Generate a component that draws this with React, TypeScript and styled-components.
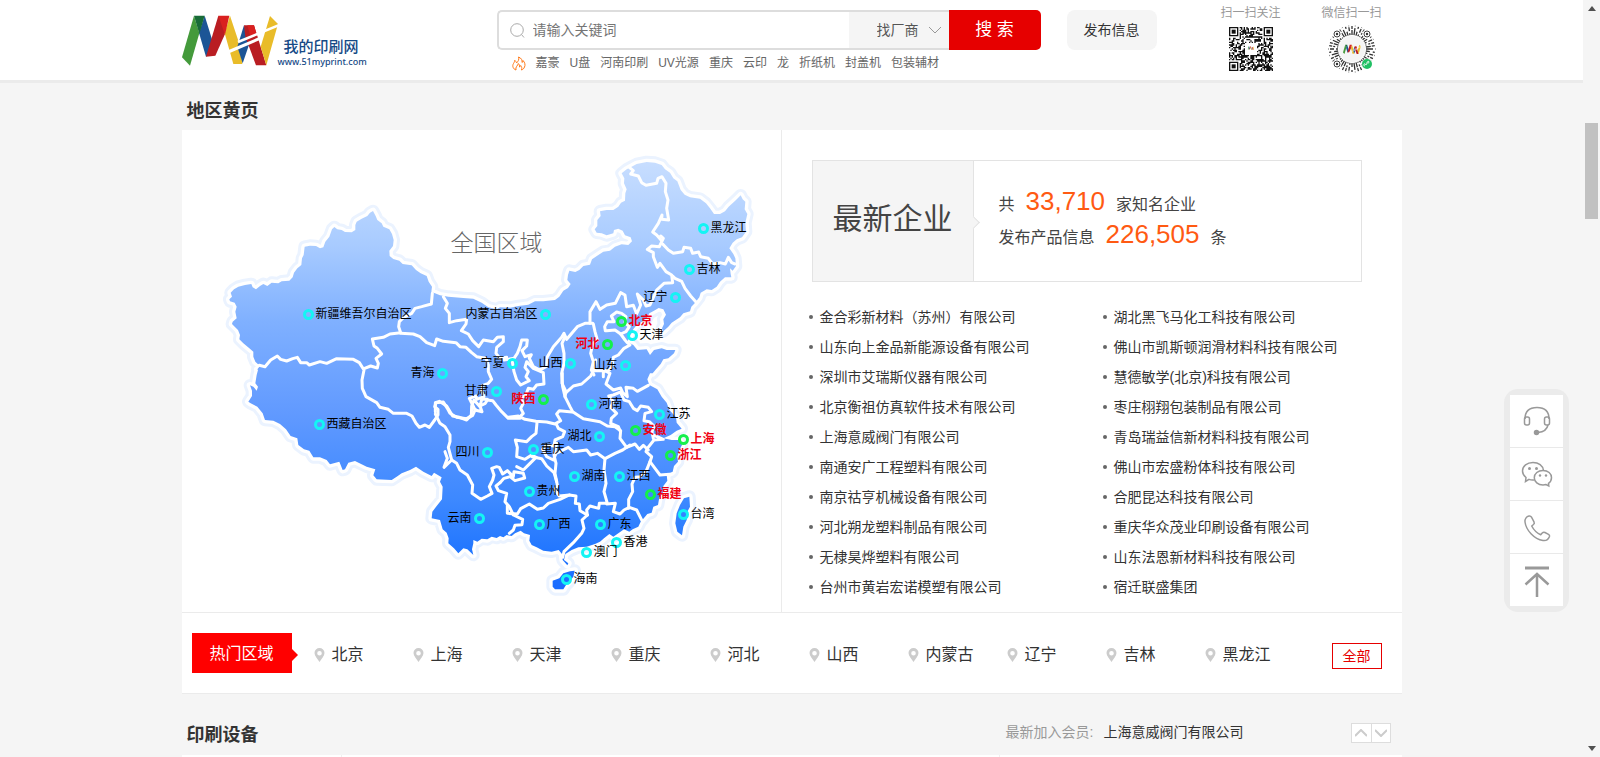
import React from 'react';
import styled, { createGlobalStyle } from 'styled-components';

const GlobalStyle = createGlobalStyle`
  *, *::before, *::after { box-sizing: border-box; }
  body {
    margin: 0;
    background: #f5f5f5;
    color: #333;
    font: 14px/20px "Liberation Sans", "Noto Sans CJK SC", sans-serif;
  }
  a { color: inherit; text-decoration: none; }
  button, input, select { font: inherit; color: inherit; border: 0; margin: 0; padding: 0; }
  button { cursor: pointer; }
  h1, h2, p, ul { margin: 0; padding: 0; font-weight: inherit; }
  ul { list-style: none; }
`;

const Page = styled.div`
  display: flex;
  flex-direction: column;
  min-height: 100vh;
  padding-right: 17px;
`;

const Container = styled.div`
  width: 1220px;
  max-width: 100%;
  margin: 0 auto;
`;

/* ---------- header ---------- */

const Header = styled.header`
  background: #fff;
  box-shadow: 0 3px 0 #ebebeb;
`;

const HeaderInner = styled(Container)`
  display: flex;
  align-items: flex-start;
  height: 80px;
`;

const LogoLink = styled.a`
  display: flex;
  flex-shrink: 0;
  width: 315px;
  padding-top: 14px;
`;

const LogoText = styled.span`
  display: flex;
  flex-direction: column;
  gap: 2px;
  padding-top: 23px;
  margin-left: -1px;
  color: #164a86;
`;

const LogoName = styled.span`
  font: 500 15px/18px "Noto Sans CJK SC", sans-serif;
  padding-left: 6px;
`;

const LogoUrl = styled.span`
  font: 500 9px/10px "Noto Sans", "Noto Sans CJK SC", sans-serif;
`;

const SearchArea = styled.div`
  width: 544px;
  padding-top: 10px;
`;

const SearchForm = styled.form`
  display: flex;
  height: 40px;
`;

const SearchBox = styled.div`
  flex: 1;
  display: flex;
  align-items: center;
  background: #fff;
  border: 2px solid #ddd;
  border-right: 0;
  border-radius: 5px 0 0 5px;
  padding-left: 11px;
  gap: 8px;
`;

const SearchInput = styled.input`
  flex: 1;
  min-width: 0;
  height: 36px;
  background: none;
  outline: none;
  &::placeholder { color: #757575; opacity: 1; }
`;

const SelectWrap = styled.div`
  display: flex;
  align-items: center;
  width: 100px;
  height: 36px;
  padding-right: 8px;
  background: #f5f5f5;
`;

const KindSelect = styled.select`
  flex: 1;
  appearance: none;
  height: 36px;
  padding-left: 28px;
  background: none;
  color: #555;
  outline: none;
`;

const SearchButton = styled.button`
  width: 92px;
  background: #e60000;
  color: #fff;
  font-size: 17px;
  border-radius: 0 5px 5px 0;
`;

const HotWords = styled.div`
  display: flex;
  align-items: center;
  gap: 10px;
  padding: 3px 0 0 15px;
  font-size: 12px;
  color: #666;
  white-space: nowrap;
`;

const PublishButton = styled.button`
  flex-shrink: 0;
  width: 90px;
  height: 40px;
  margin: 10px 64px 0 26px;
  background: #f5f5f5;
  border-radius: 8px;
`;

const Codes = styled.div`
  display: flex;
  gap: 41px;
`;

const CodeBlock = styled.div`
  display: flex;
  flex-direction: column;
  align-items: center;
  width: 60px;
  height: 75px;
  padding-top: 3px;
  font-size: 12px;
  color: #999;
  white-space: nowrap;
`;

const CodeArt = styled.div`
  display: flex;
  flex: 1;
  align-items: center;
`;

/* ---------- sections ---------- */

const SectionHead = styled(Container)<{ $top: number; $bottom: number }>`
  display: flex;
  align-items: center;
  padding: ${p => p.$top}px 11px ${p => p.$bottom}px 5px;
`;

const SectionTitle = styled.h2`
  flex: 1;
  font-size: 18px;
  line-height: 24px;
  font-weight: 700;
`;

const Card = styled(Container)`
  background: #fff;
  border-bottom: 1px solid #ebebeb;
`;

const Split = styled.div`
  display: flex;
  border-bottom: 1px solid #ebebeb;
`;

const MapPane = styled.div`
  position: relative;
  width: 600px;
  height: 482px;
  border-right: 1px solid #ebebeb;
`;

const MapSvg = styled.svg`
  display: block;
`;

const MapTitle = styled.h2`
  position: absolute;
  left: 269px;
  top: 97px;
  font: 300 23px/28px "Noto Sans CJK SC", sans-serif;
  color: #666;
`;

const Place = styled.a<{ $x: number; $y: number; $left?: boolean; $hot?: boolean }>`
  position: absolute;
  top: ${p => p.$y - 8}px;
  ${p => (p.$left ? `right: ${594 - p.$x}px;` : `left: ${p.$x - 5}px;`)}
  display: flex;
  flex-direction: ${p => (p.$left ? 'row-reverse' : 'row')};
  align-items: center;
  gap: 2px;
  font-size: 12px;
  line-height: 17px;
  white-space: nowrap;
  color: ${p => (p.$hot ? '#f00012' : '#000')};
  font-weight: ${p => (p.$hot ? 700 : 400)};
  &::before {
    content: "";
    width: 11px;
    height: 11px;
    border: 3px solid ${p => (p.$hot ? '#13f04c' : '#14f4f4')};
    border-radius: 50%;
  }
`;

const InfoPane = styled.div`
  flex: 1;
  padding: 30px 0 0 30px;
`;

const StatBox = styled.div`
  display: flex;
  width: 550px;
  height: 122px;
  border: 1px solid #e3e3e3;
`;

const StatName = styled.h2`
  position: relative;
  width: 161px;
  padding-left: 20px;
  font-size: 30px;
  line-height: 116px;
  color: #444;
  background: #f5f5f5;
  border-right: 1px solid #e3e3e3;
  &::after {
    content: "";
    position: absolute;
    right: -5px;
    top: 57px;
    width: 9px;
    height: 9px;
    background: #f5f5f5;
    border: solid #e3e3e3;
    border-width: 1px 1px 0 0;
    transform: rotate(45deg);
  }
`;

const StatLines = styled.div`
  padding: 24px 0 0 25px;
  font-size: 16px;
  line-height: 33px;
  color: #444;
`;

const StatLine = styled.p`
  display: flex;
  align-items: baseline;
  gap: 11px;
  height: 33px;
`;

const Figure = styled.strong`
  font-weight: 400;
  font-size: 26px;
  color: #ff5a12;
`;

const CompanyList = styled.ul`
  display: grid;
  grid-template-columns: 294px 1fr;
  grid-auto-rows: 30px;
  padding-top: 20px;
`;

const Company = styled.li`
  display: flex;
  align-items: center;
  gap: 7px;
  margin-left: -3px;
  white-space: nowrap;
  &::before {
    content: "";
    width: 4px;
    height: 4px;
    background: #666;
    border-radius: 50%;
  }
`;

const RegionRow = styled.div`
  display: flex;
  align-items: center;
  height: 80px;
  padding: 0 20px 0 10px;
`;

const RegionTag = styled.h2`
  position: relative;
  width: 100px;
  height: 40px;
  background: #f00;
  color: #fff;
  font-size: 16px;
  line-height: 42px;
  text-align: center;
  &::after {
    content: "";
    position: absolute;
    left: 100px;
    top: 16px;
    border: solid transparent;
    border-width: 6px 0 6px 6px;
    border-left-color: #f00;
  }
`;

const RegionList = styled.ul`
  flex: 1;
  display: flex;
  padding: 4px 0 0 22px;
`;

const Region = styled.li`
  width: 99px;
  font-size: 16px;
  line-height: 24px;
  white-space: nowrap;
`;

const RegionLink = styled.a`
  display: flex;
  align-items: center;
  gap: 7px;
`;

const AllLink = styled.a`
  width: 50px;
  margin-top: 6px;
  border: 1px solid #e60000;
  color: #e60000;
  line-height: 24px;
  text-align: center;
`;

const NewMember = styled.p`
  display: flex;
  gap: 10px;
  margin-right: 107px;
  padding-bottom: 5px;
`;

const Muted = styled.span`
  color: #999;
`;

const Stepper = styled.div`
  display: flex;
  margin-bottom: 3px;
  border: 1px solid #ddd;
  background: #fff;
`;

const StepButton = styled.button`
  display: flex;
  align-items: center;
  justify-content: center;
  width: 19px;
  height: 18px;
  background: #fff;
  & + & { border-left: 1px solid #ddd; }
`;

const NextCard = styled(Container)`
  flex: 1;
  display: grid;
  grid-template-columns: 160px 658px 1fr;
  background: #fff;
`;

const NextColumn = styled.div`
  border-right: 1px solid #f0f0f0;
`;

/* ---------- floating parts ---------- */

const SideTools = styled.nav`
  position: fixed;
  right: 37px;
  top: 395px;
  display: flex;
  flex-direction: column;
  gap: 1px;
  background: #e9e9e9;
  box-shadow: 0 0 0 6px #ebebeb;
  border-radius: 8px;
`;

const ToolButton = styled.button`
  display: flex;
  align-items: center;
  justify-content: center;
  width: 53px;
  height: 52px;
  background: #fff;
`;

const ScrollTrack = styled.div`
  position: fixed;
  top: 0;
  right: 0;
  bottom: 0;
  width: 17px;
  display: flex;
  flex-direction: column;
  align-items: center;
  padding: 6px 0;
  background: #f5f5f5;
`;

const ScrollThumb = styled.div`
  width: 13px;
  height: 96px;
  margin: 112px 0 auto;
  background: #c1c1c1;
`;

/* ---------- map data (map units are thirds of a pixel) ---------- */

const pts = (dx: number, dy: number, list: string) =>
  list
    .split(' ')
    .map(p => {
      const [x, y] = p.split(',').map(Number);
      return `${x + dx},${y + dy}`;
    })
    .join(' ');

const west = (l: string) => pts(0, 0, l);
const north = (l: string) => pts(840, 0, l);
const south = (l: string) => pts(570, 660, l);
const southwest = (l: string) => pts(60, 690, l);

const mainland = [
  west('62,458 72,448 85,440 105,435 124,432 128,442 138,448 150,438 160,432 172,438 185,428 205,430 215,424 238,422 248,412 252,398 262,385 274,375 276,355 281,345 284,320 300,317 318,318 330,325 340,322 346,305 358,290 366,268 373,261 382,268 395,270 405,276 425,277 436,270 436,255 440,245 455,236 472,228 480,218 489,213 497,228 502,240 515,250 520,260 538,268 546,282 551,300 549,318 538,332 539,348 550,357 568,362 578,372 605,376 618,390 632,400 650,408 656,425 666,440 664,455 690,466 715,470 760,474 790,476 815,488 835,502 860,508'),
  north('30,502 60,503 85,498 115,494 135,484 160,484 195,480 208,470 220,452 234,444 242,432 232,420 234,405 238,392 256,396 268,390 280,378 300,374 306,358 325,345 340,335 360,332 375,320 395,313 415,315 426,304 422,292 405,286 398,272 385,266 372,270 370,280 350,286 335,280 320,278 314,268 322,258 322,240 332,228 330,214 350,210 370,210 385,200 393,188 405,182 406,160 410,148 402,130 403,115 395,100 410,88 425,80 440,72 470,66 495,68 515,75 525,88 540,98 550,115 562,124 572,150 584,164 600,172 630,176 648,190 660,205 672,222 690,222 705,214 716,200 738,180 752,166 758,178 766,185 764,208 772,222 766,248 768,275 756,292 740,298 728,308 718,325 730,342 736,355 738,378 728,392 720,385 722,402 724,412 705,412 690,425 680,440 665,450 650,448 632,458 628,472 614,490 604,500 600,514 580,520 570,532 545,548 535,560 520,574 516,565 522,552 520,538 528,524 520,508 506,504 492,512 478,520 470,535 456,545 440,555 428,570 420,588 412,605 430,615 442,630 470,628 480,645 492,630 515,625 530,630 556,630 552,640 535,655 520,658 512,672 498,688 488,700'),
  south('750,40 742,58 748,75 772,88 785,110 800,128 808,150 828,172 830,188 845,206 830,212 812,225 790,235 815,240 838,240 846,255 838,270 832,290 834,305 822,318 818,335 800,345 802,362 790,378 788,400 778,412 774,435 760,440 755,458 742,462 732,474 722,485 715,500 698,508 688,515 672,508 655,520 640,530 628,522 612,535 600,545 585,552 560,560 535,562 515,570 496,582 492,600 505,610 502,616 488,600 486,582 476,570 455,575 430,572 410,562 395,555 388,542 390,525 372,520 362,512 345,520 335,528 320,525 310,532 300,528 290,534 275,530 262,538 245,536 232,545 220,540'),
  southwest('730,520 726,538 730,555 712,538 700,535 685,550 672,535 655,520 656,505 650,488 638,478 630,450 605,445 607,425 620,408 636,388 638,350 630,335 635,322 612,308 605,318 580,305 558,290 540,300 515,310 500,320 485,330 440,328 430,316 436,298 410,290 375,273 355,278 345,298 338,300 328,275 300,283 290,270 270,262 250,262 238,242 222,238 205,225 202,205 182,198 168,178 150,162 130,152 105,150 98,130 82,110 62,100 55,95 66,78 66,62 60,46 70,50 80,62 84,50 76,40 80,15 84,0'),
  west('142,688 150,678 136,665 130,650 130,635 118,625 100,610 88,598 90,585 84,570 66,552 68,545 80,535 76,515 80,500 74,488 60,484 58,478 66,470'),
].join(' ');

const islands = [
  south('458,662 478,655 490,640 510,634 524,632 520,650 508,665 498,675 490,688 465,688 458,680'),
  south('852,415 868,410 870,440 862,455 860,480 850,500 846,526 832,515 826,490 830,460 840,435'),
];

const borders = [
  west('667,460 664,492 635,500 615,505 605,520 580,533 568,545 566,560 572,578 540,582 520,592 487,597 492,618 502,625 515,642 498,655 505,670 502,684 482,678 462,686'),
  west('148,676 165,680 182,660 202,648 212,658 230,663 248,656 262,652 272,668 290,668 298,675 330,665 350,670 380,656 430,658 448,668 462,690 456,720 457,745 468,770 500,788 510,802 535,808 550,820 590,820 606,828 618,850 628,862 645,855 658,862 674,840 684,825 684,808 674,800 678,788 700,786 712,805 720,820 740,832 770,836 788,826 796,808'),
  west('572,580 610,582 630,590 650,608 674,617 680,597 700,604 738,608 750,620 768,622 785,638 800,650 828,655 835,675 835,695 845,718 835,730 818,736 816,752 822,770 800,778 798,768 778,775 788,795 795,810 816,815 810,798 826,790 832,780 848,782 858,795 875,815 895,835 930,835'),
  west('700,470 712,490 706,505 718,520 718,548 740,542 770,538 768,552 754,572 775,582 788,602 806,620 820,600 850,605 862,592 880,590 880,605 860,622 858,640 870,655 890,652'),
  north('42,660 72,655 82,640 90,620 95,600 112,600 110,618 96,632 105,650 124,644 118,655 130,680 150,690 168,680 172,650 190,620 215,592 222,580 230,598 262,560 285,550 308,550'),
  north('225,590 216,610 222,640 222,670 215,700 218,740 225,770'),
  south('337,5 342,35 350,60 362,75 388,62 378,50 385,35 375,22 380,5 400,25 430,38 432,72 410,75 400,88 385,85 376,108 362,112 370,130 362,145 370,160 358,172'),
  south('487,40 486,70 498,95 495,110 510,140 518,155 550,176 600,185 622,198 645,200 662,212 660,235 680,262 705,252 718,268 730,256 745,270'),
  south('325,172 355,168 375,178 408,184 440,186 465,192 482,182 470,162 478,152 516,156'),
  south('411,188 408,220 395,230 380,245 346,240 352,262 350,290 375,298 395,285 408,292'),
  south('468,190 475,205 494,215 488,230 465,240 462,258 440,255 428,268 440,290 460,300 468,280 505,262 520,275 560,270 572,285 592,280 615,296 645,280 668,270 690,255'),
  south('396,290 425,296 440,318 462,338 470,365'),
  north('300,550 300,515 318,485 330,508 350,495 376,490 392,458 405,465 410,500 430,496 440,522 452,495 442,462 460,480 468,498 480,495 500,450 522,430 548,428 545,405 528,395 510,370 502,382 490,350 490,338 472,328 485,318 508,320 520,295 512,288'),
  north('548,408 555,415 575,424 585,445 602,468 618,486'),
  north('518,312 535,330 550,340 578,335 582,322 602,325 608,340 626,336 632,350 655,355 668,372 690,368 706,372 715,352 725,368 735,372'),
  north('418,82 430,92 422,102 445,108 455,128 468,136 500,130 504,115 516,110 528,130 526,155 534,180 530,205 536,240 515,238 516,225 505,250 488,276 500,285 515,302'),
  north('310,552 315,575 322,600 308,612 302,640 310,665 304,690 312,705'),
  north('346,572 344,560 352,545 372,545 364,528 380,516 395,520 408,530 405,548 418,560 408,575 392,582 375,570 350,572'),
  north('392,582 405,600 412,608 420,615 402,625 385,645 370,652 366,680 358,690 340,695 340,710'),
  south('587,0 584,25 572,48 545,72 520,78 498,98'),
  south('584,32 615,32 630,40 618,72 640,90 662,84 668,98 682,110 678,82 700,85 712,94 745,76'),
  south('662,98 672,120 688,125 700,145 712,152 722,138 745,142 755,155 735,160 732,182 748,185 762,198 756,215 760,235'),
  south('664,95 640,105 626,108 640,125 632,142 650,160 634,175 632,190 655,200 660,212'),
  south('760,225 790,238 762,240 742,265 738,275 755,290 750,305 765,325 780,345 818,342'),
  south('750,305 738,335 722,350 705,352 696,372 698,395 686,418 686,445'),
  south('615,296 612,330 618,370 612,395 622,430 598,430 596,445 570,438 560,450 562,465'),
  south('620,432 646,430 640,455 660,462 672,450 688,442 710,450 726,482'),
  south('562,465 546,480 552,505 545,520 520,548 492,575 488,592'),
  south('470,250 462,285 468,310 465,340 472,375 465,390 478,408 508,405'),
  south('322,436 322,460 352,462 362,446 388,432 412,448 430,444 445,430 480,418 508,405 528,408 526,430 538,432 540,452 562,465'),
  south('300,368 288,378 295,392 320,400 315,425 328,440 340,465 368,478 366,494 345,496 340,510 328,520'),
  south('106,155 106,128 118,124 140,138 158,168 178,172 200,180 214,165 215,138 222,120 240,140 245,118 262,118'),
  south('106,162 120,190 135,200 150,225 150,245 145,262 155,300 132,322 142,295 135,275'),
  south('155,300 170,310 180,330 202,345 210,360 218,375 216,400 242,418 262,408 276,400 268,380 278,360 282,345 275,325 290,320 298,322 308,342 322,332 340,350 342,335 370,340 374,354 345,362 330,350 312,355 300,368'),
  south('350,320 370,330 390,310 408,292'),
];

type PlaceInfo = { n: string; x: number; y: number; left?: boolean; hot?: boolean };

const places: PlaceInfo[] = [
  { n: '新疆维吾尔自治区', x: 126, y: 184 },
  { n: '西藏自治区', x: 137, y: 294 },
  { n: '青海', x: 261, y: 243, left: true },
  { n: '甘肃', x: 315, y: 261, left: true },
  { n: '黑龙江', x: 521, y: 98 },
  { n: '吉林', x: 507, y: 139 },
  { n: '辽宁', x: 494, y: 167, left: true },
  { n: '内蒙古自治区', x: 364, y: 184, left: true },
  { n: '北京', x: 439, y: 191, hot: true },
  { n: '天津', x: 450, y: 205 },
  { n: '河北', x: 426, y: 214, left: true, hot: true },
  { n: '宁夏', x: 331, y: 233, left: true },
  { n: '山西', x: 389, y: 233, left: true },
  { n: '山东', x: 444, y: 235, left: true },
  { n: '陕西', x: 362, y: 269, left: true, hot: true },
  { n: '河南', x: 409, y: 274 },
  { n: '江苏', x: 477, y: 284 },
  { n: '安徽', x: 453, y: 300, hot: true },
  { n: '上海', x: 501, y: 309, hot: true },
  { n: '湖北', x: 418, y: 306, left: true },
  { n: '四川', x: 306, y: 322, left: true },
  { n: '重庆', x: 351, y: 319 },
  { n: '浙江', x: 488, y: 325, hot: true },
  { n: '湖南', x: 392, y: 346 },
  { n: '江西', x: 437, y: 346 },
  { n: '贵州', x: 347, y: 361 },
  { n: '福建', x: 468, y: 364, hot: true },
  { n: '台湾', x: 501, y: 384 },
  { n: '云南', x: 298, y: 388, left: true },
  { n: '广西', x: 357, y: 394 },
  { n: '广东', x: 418, y: 394 },
  { n: '香港', x: 434, y: 412 },
  { n: '澳门', x: 404, y: 422 },
  { n: '海南', x: 384, y: 449 },
];

const hotWords = ['嘉豪', 'U盘', '河南印刷', 'UV光源', '重庆', '云印', '龙', '折纸机', '封盖机', '包装辅材'];

const companies = [
  '金合彩新材料（苏州）有限公司', '湖北黑飞马化工科技有限公司',
  '山东向上金品新能源设备有限公司', '佛山市凯斯顿润滑材料科技有限公司',
  '深圳市艾瑞斯仪器有限公司', '慧德敏学(北京)科技有限公司',
  '北京衡祖仿真软件技术有限公司', '枣庄栩翔包装制品有限公司',
  '上海意威阀门有限公司', '青岛瑞益信新材料科技有限公司',
  '南通安广工程塑料有限公司', '佛山市宏盛粉体科技有限公司',
  '南京祜亨机械设备有限公司', '合肥昆达科技有限公司',
  '河北朔龙塑料制品有限公司', '重庆华众茂业印刷设备有限公司',
  '无棣昊烨塑料有限公司', '山东法恩新材料科技有限公司',
  '台州市黄岩宏诺模塑有限公司', '宿迁联盛集团',
];

const regions = ['北京', '上海', '天津', '重庆', '河北', '山西', '内蒙古', '辽宁', '吉林', '黑龙江'];

/* ---------- drawings ---------- */

const LogoShapes = () => (
  <>
    <path fill="#449a3b" d="M72 47 36 172 60 197 88 100Z" />
    <path fill="#1c5596" d="M104 47 87 98 108 170 136 150Z" />
    <path fill="#186b37" d="M72 47H104L88 102Z" />
    <path fill="#b91d22" d="M145 47 108 170 136 167 166 100 158 60Z" />
    <path fill="#e9bc29" d="M180 47 164 100 190 192H217L211 140Z" />
    <path fill="#d9201f" d="M145 47H178L165 104Z" />
    <path fill="#1c5596" d="M222 76 202 140 218 190 242 120Z" />
    <path fill="#b91d22" d="M222 76H252L289 196H258L226 110Z" />
    <path fill="#d9201f" d="M232 76H252L262 110 240 104Z" />
    <path fill="#e9bc29" d="M300 48 324 72 289 196 272 140Z" />
    <path stroke="#fff" strokeWidth="8" d="M204 126 330 74" />
    <path stroke="#fff" strokeWidth="9" d="M174 156 268 116" />
  </>
);

const Logo = () => (
  <LogoLink href="#" aria-label="我的印刷网">
    <svg width="97" height="54" viewBox="36 42 291 162"><LogoShapes /></svg>
    <LogoText>
      <LogoName>我的印刷网</LogoName>
      <LogoUrl>www.51myprint.com</LogoUrl>
    </LogoText>
  </LogoLink>
);

const N = 33;
const inFinder = (x: number, y: number) =>
  (x < 8 && y < 8) || (x >= N - 8 && y < 8) || (x < 8 && y >= N - 8);

const qrPath = (() => {
  let seed = 51;
  let d = '';
  for (let y = 0; y < N; y++)
    for (let x = 0; x < N; x++) {
      seed = (seed * 1103515245 + 12345) % 2147483648;
      const mid = Math.abs(x - 16) < 5 && Math.abs(y - 16) < 5;
      if (!inFinder(x, y) && !mid && seed / 2147483648 > 0.44) d += `M${x} ${y}h1v1h-1z`;
    }
  return d;
})();

const QrCode = () => (
  <svg width="44" height="44" viewBox="0 0 33 33" aria-hidden="true">
    <path d={qrPath} fill="#111" />
    {[[0, 0], [26, 0], [0, 26]].map(([x, y]) => (
      <g key={`${x}-${y}`} fill="#111">
        <path fillRule="evenodd" d={`M${x} ${y}h7v7h-7zM${x + 1} ${y + 1}v5h5v-5z`} />
        <rect x={x + 2} y={y + 2} width="3" height="3" />
      </g>
    ))}
    <svg x="14" y="14" width="5" height="4" viewBox="36 42 291 162"><LogoShapes /></svg>
  </svg>
);

const MiniCode = () => (
  <svg width="48" height="48" viewBox="-24 -24 48 48" aria-hidden="true">
    {Array.from({ length: 44 }, (_, i) => {
      const dash = ['5 1 3', '2 2 4 1', '7 2 1', '1 2 2 1 3', '4 3 2'][(i * 7) % 5];
      return (
        <path key={i} d="M0-14V-23.500" stroke="#333" strokeWidth="1.300" strokeDasharray={dash} transform={`rotate(${(i * 360) / 44})`} />
      );
    })}
    {[[-15, -15], [15, -15], [-15, 15]].map(([x, y]) => (
      <g key={`${x}${y}`}>
        <circle cx={x} cy={y} r="4.500" fill="#fff" />
        <circle cx={x} cy={y} r="3" fill="none" stroke="#444" />
        <circle cx={x} cy={y} r="1.200" fill="#333" />
      </g>
    ))}
    <circle r="13" fill="#f5f5f5" />
    <svg x="-9" y="-5" width="18" height="11" viewBox="36 42 291 162"><LogoShapes /></svg>
    <circle cx="15" cy="15" r="5.500" fill="#fff" />
    <circle cx="15" cy="15" r="5" fill="#21c064" />
    <path d="M13 17c-2 0-1-3 0-2s2 1 2-1 2-2 2-1-1 1-1 1" stroke="#fff" fill="none" />
  </svg>
);

const Flame = () => (
  <svg width="14" height="15" viewBox="0 0 14 15" fill="none" stroke="#ff7a1a" strokeLinejoin="round" aria-hidden="true">
    <path d="M4 14C1 13 0 10 1.500 7.500c1-1.500 1-2 1-3C4 5 4.500 6 4.500 7 6 5.500 7.500 3.500 6.500 1c3 1 4 3.500 3.500 5.500.8-.3 1-1 1-2C13 6.500 13.500 9 12.500 11c-.6 1.500-1.500 2.500-3 3 .8-2 0-3.500-.8-4.500-.2 1-.7 1.200-1.200 1.500.2-1.500-.2-2.500-1.200-3.500C6 9.500 3 11 4 14Z" />
  </svg>
);

const Pin = () => (
  <svg width="11" height="14" viewBox="0 0 11 14" aria-hidden="true">
    <path fillRule="evenodd" fill="#ccc" d="M5.500 0a5 5 0 0 1 5 5c0 3-3.200 6-5 9-1.800-3-5-6-5-9a5 5 0 0 1 5-5Zm0 3a2.300 2.300 0 1 0 0 4.600 2.300 2.300 0 0 0 0-4.600Z" />
  </svg>
);

const Chevron = ({ up, color = '#999', weight = 1 }: { up?: boolean; color?: string; weight?: number }) => (
  <svg width="12" height="8" viewBox="0 0 12 8" fill="none" stroke={color} strokeWidth={weight} aria-hidden="true">
    <path d={up ? 'M0 7 6 1l6 6' : 'M0 1l6 6 6-6'} />
  </svg>
);

const ChinaMap = () => (
  <MapSvg width="599" height="482" viewBox="-84 -30 1797 1446" strokeLinejoin="round" strokeLinecap="round" aria-hidden="true">
    <defs>
      <linearGradient id="land" gradientUnits="userSpaceOnUse" x1="0" y1="60" x2="0" y2="1340">
        <stop offset="0" stopColor="#c8deff" />
        <stop offset="0.200" stopColor="#a8cbff" />
        <stop offset="0.380" stopColor="#7fb0ff" />
        <stop offset="0.600" stopColor="#6099ff" />
        <stop offset="0.800" stopColor="#3c88ff" />
        <stop offset="0.920" stopColor="#2176ff" />
        <stop offset="1" stopColor="#1b6cff" />
      </linearGradient>
    </defs>
    {[{ c: '#ebf3ff', w: 38 }, { c: '#fff', w: 20 }].map(s => (
      <g key={s.c} fill={s.c} stroke={s.c} strokeWidth={s.w}>
        <polygon points={mainland} />
        {islands.map(p => <polygon key={p} points={p} />)}
      </g>
    ))}
    <g fill="url(#land)">
      <polygon points={mainland} />
      {islands.map(p => <polygon key={p} points={p} />)}
    </g>
    <g fill="none" stroke="#fff" strokeWidth="9">
      {borders.map(b => <polyline key={b} points={b} />)}
    </g>
  </MapSvg>
);

const iconProps = { width: 32, height: 32, viewBox: '0 0 32 32', fill: 'none', stroke: '#999', strokeWidth: 1.5, 'aria-hidden': true } as const;

const Headset = () => (
  <svg {...iconProps}>
    <path d="M4 14C4 6 9 2.500 16 2.500S28 6 28 14" />
    <rect x="3.500" y="12" width="5" height="8" rx="2" />
    <rect x="23.500" y="12" width="5" height="8" rx="2" />
    <path d="M27 20c-1 5-5 7-10 7.500" />
    <circle cx="15.500" cy="27.500" r="2" fill="#999" />
  </svg>
);

const Wechat = () => (
  <svg {...iconProps}>
    <path d="M13 22c-1.500.2-3.500 0-5-.6L4.500 23.500l.5-4C2.500 17.500 1.500 15.500 1.500 13 1.500 8 6 4.500 12 4.500c5.500 0 10 3 10.500 8" />
    <path d="M22 12.500c5 0 8.500 3 8.500 7.200 0 2.300-1.200 4.300-3 5.600l.3 2.700-2.800-1.500c-1 .3-2 .4-3 .4-5 0-8.700-3-8.700-7.200s3.700-7.200 8.700-7.200Z" />
    <g fill="#999" stroke="none">
      <circle cx="8.500" cy="10.500" r="1.500" /><circle cx="15.500" cy="10.500" r="1.500" />
      <circle cx="19" cy="17.500" r="1.200" /><circle cx="25" cy="17.500" r="1.200" />
    </g>
  </svg>
);

const Phone = () => (
  <svg {...iconProps} strokeLinejoin="round">
    <path d="M8 5C5.500 5.500 3.500 8 4 11c1 8 9 17 18 18.500 3 .5 5.500-1.500 6.500-4 .3-1-.2-1.700-1-2.200l-3.500-1.800c-1-.5-2-.3-2.800.5l-1.500 1.800c-4-1.800-7-5-9-8.800l1.800-1.500c.8-.7 1-1.800.5-2.700L10.500 6.200C10 5.300 9 4.800 8 5Z" />
  </svg>
);

const ToTop = () => (
  <svg {...iconProps} height="36" viewBox="0 -4 32 36">
    <path d="M4 2H28" strokeWidth="3" />
    <path d="M16 31V8M4.500 18.500 16 8l11.500 10.500" strokeWidth="2.500" />
  </svg>
);

const App = () => (
  <>
    <GlobalStyle />
    <Page>
      <Header>
        <HeaderInner>
          <Logo />
          <SearchArea>
            <SearchForm onSubmit={e => e.preventDefault()}>
              <SearchBox>
                <svg width="15" height="15" viewBox="0 0 15 15" fill="none" stroke="#aaa" aria-hidden="true">
                  <circle cx="7" cy="7" r="6.300" />
                  <path d="M11.500 11.500 14 14.500" />
                </svg>
                <SearchInput aria-label="关键词" placeholder="请输入关键词" />
                <SelectWrap>
                  <KindSelect aria-label="搜索类型">
                    <option>找厂商</option>
                  </KindSelect>
                  <Chevron />
                </SelectWrap>
              </SearchBox>
              <SearchButton type="submit">搜 索</SearchButton>
            </SearchForm>
            <HotWords>
              <Flame />
              {hotWords.map(w => <a key={w} href="#">{w}</a>)}
            </HotWords>
          </SearchArea>
          <PublishButton type="button">发布信息</PublishButton>
          <Codes>
            <CodeBlock>扫一扫关注<CodeArt><QrCode /></CodeArt></CodeBlock>
            <CodeBlock>微信扫一扫<CodeArt><MiniCode /></CodeArt></CodeBlock>
          </Codes>
        </HeaderInner>
      </Header>

      <SectionHead $top={19} $bottom={7}>
        <SectionTitle>地区黄页</SectionTitle>
      </SectionHead>
      <Card>
        <Split>
          <MapPane>
            <ChinaMap />
            <MapTitle>全国区域</MapTitle>
            {places.map(p => (
              <Place key={p.n} href="#" $x={p.x} $y={p.y} $left={p.left} $hot={p.hot}>{p.n}</Place>
            ))}
          </MapPane>
          <InfoPane>
            <StatBox>
              <StatName>最新企业</StatName>
              <StatLines>
                <StatLine>共 <Figure>33,710</Figure> 家知名企业</StatLine>
                <StatLine>发布产品信息 <Figure>226,505</Figure> 条</StatLine>
              </StatLines>
            </StatBox>
            <CompanyList>
              {companies.map(c => <Company key={c}><a href="#">{c}</a></Company>)}
            </CompanyList>
          </InfoPane>
        </Split>
        <RegionRow>
          <RegionTag>热门区域</RegionTag>
          <RegionList>
            {regions.map(r => (
              <Region key={r}><RegionLink href="#"><Pin />{r}</RegionLink></Region>
            ))}
          </RegionList>
          <AllLink href="#">全部</AllLink>
        </RegionRow>
      </Card>

      <SectionHead $top={28} $bottom={8}>
        <SectionTitle>印刷设备</SectionTitle>
        <NewMember><Muted>最新加入会员:</Muted><a href="#">上海意威阀门有限公司</a></NewMember>
        <Stepper>
          <StepButton type="button" aria-label="上一个"><Chevron up color="#ccc" weight={2} /></StepButton>
          <StepButton type="button" aria-label="下一个"><Chevron color="#ccc" weight={2} /></StepButton>
        </Stepper>
      </SectionHead>
      <NextCard><NextColumn /><NextColumn /></NextCard>
    </Page>

    <SideTools aria-label="快捷工具">
      <ToolButton type="button" aria-label="客服"><Headset /></ToolButton>
      <ToolButton type="button" aria-label="微信"><Wechat /></ToolButton>
      <ToolButton type="button" aria-label="电话"><Phone /></ToolButton>
      <ToolButton type="button" aria-label="返回顶部"><ToTop /></ToolButton>
    </SideTools>
    <ScrollTrack aria-hidden="true">
      <svg width="8" height="5"><path d="M0 5 4 0l4 5Z" fill="#505050" /></svg>
      <ScrollThumb />
      <svg width="8" height="5"><path d="M0 0 4 5l4-5Z" fill="#505050" /></svg>
    </ScrollTrack>
  </>
);

export default App;
